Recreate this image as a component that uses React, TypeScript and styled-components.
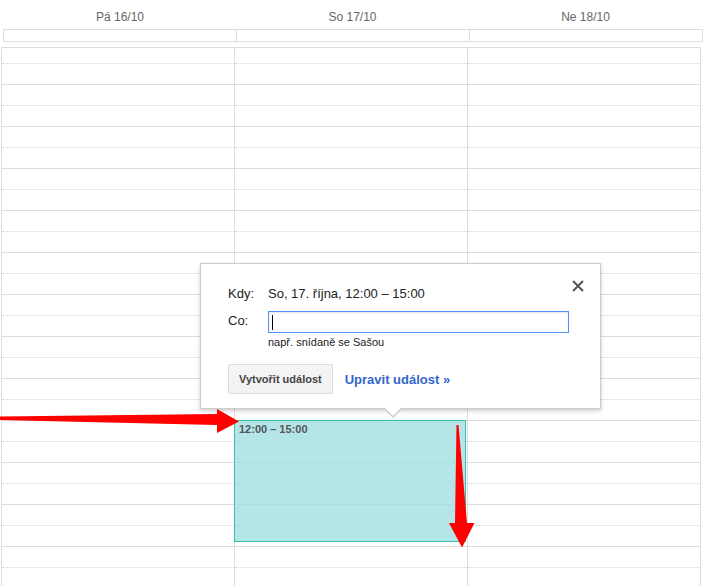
import React from 'react';
import styled, { createGlobalStyle } from 'styled-components';

const GlobalStyle = createGlobalStyle`
  html, body {
    margin: 0;
    padding: 0;
    background: #fff;
    font-family: 'Liberation Sans', Arial, sans-serif;
    overflow: hidden;
  }
`;

const COLUMNS = '232px 233px 233px';

const Page = styled.div`
  position: relative;
  width: 707px;
  height: 586px;
  overflow: hidden;
`;

const HeaderRow = styled.div`
  display: grid;
  grid-template-columns: ${COLUMNS};
  width: 698px;
  margin-left: 4px;
  height: 29px;
`;

const DayLabel = styled.div`
  display: flex;
  align-items: flex-end;
  justify-content: center;
  padding-bottom: 5px;
  box-sizing: border-box;
  font-size: 12px;
  line-height: 14px;
  color: #666;
`;

const AllDayRow = styled.div`
  display: grid;
  grid-template-columns: ${COLUMNS};
  width: 698px;
  height: 11px;
  margin-left: 3px;
  border: 1px solid #ddd;
`;

const AllDayCell = styled.div<{ $first?: boolean }>`
  border-left: ${(p) => (p.$first ? 'none' : '1px solid #ddd')};
`;

const Grid = styled.div`
  display: grid;
  grid-template-columns: ${COLUMNS};
  width: 698px;
  height: 560px;
  margin: 5px 0 0 1px;
  border: 1px solid #ddd;
  border-bottom: none;
`;

const Column = styled.div<{ $first?: boolean }>`
  position: relative;
  border-left: ${(p) => (p.$first ? 'none' : '1px solid #ddd')};
`;

const Slots = styled.div`
  margin-top: -5px;
  overflow: hidden;
  height: 545px;
`;

const Slot = styled.div<{ $dotted: boolean }>`
  height: 21px;
  box-sizing: border-box;
  border-bottom: 1px ${(p) => (p.$dotted ? 'dotted #d4d4d4' : 'solid #ddd')};
`;

const Event = styled.div`
  position: absolute;
  top: 372px;
  left: -1px;
  width: 232px;
  height: 122px;
  box-sizing: border-box;
  border: 1px solid #3cbfa9;
  background: rgba(160, 222, 228, 0.8);
  padding: 2px 4px;
  font-size: 11px;
  line-height: 13px;
  font-weight: bold;
  color: #555;
`;

const Bubble = styled.div`
  position: absolute;
  left: 200px;
  top: 263px;
  width: 401px;
  box-sizing: border-box;
  background: #fff;
  border: 1px solid #ccc;
  box-shadow: 0 2px 4px rgba(0, 0, 0, 0.2);
  padding: 22px 27px 14px;
  font-size: 13px;
  color: #222;
`;

const Tail = styled.div`
  position: absolute;
  left: 182px;
  bottom: -10px;
  width: 0;
  height: 0;
  border-left: 10px solid transparent;
  border-right: 10px solid transparent;
  border-top: 10px solid #ccc;

  &::after {
    content: '';
    position: absolute;
    left: -9px;
    top: -11px;
    border-left: 9px solid transparent;
    border-right: 9px solid transparent;
    border-top: 9px solid #fff;
  }
`;

const Close = styled.button`
  position: absolute;
  top: 14px;
  right: 14px;
  width: 16px;
  height: 16px;
  padding: 0;
  border: none;
  background: none;
  display: flex;
  align-items: center;
  justify-content: center;
  cursor: pointer;
`;

const Field = styled.div`
  display: grid;
  grid-template-columns: 40px 1fr;
  align-items: start;
  line-height: 16px;
`;

const Label = styled.div<{ $pad?: number }>`
  padding-top: ${(p) => p.$pad ?? 0}px;
  color: #222;
`;

const InputWrap = styled.div`
  margin-top: 9px;
  display: flex;
  flex-direction: column;
`;

const TextInput = styled.div`
  width: 301px;
  height: 22px;
  box-sizing: border-box;
  border: 1px solid #4d90fe;
  box-shadow: inset 0 1px 2px rgba(0, 0, 0, 0.1);
  display: flex;
  align-items: center;
  padding-left: 3px;
`;

const Caret = styled.span`
  width: 1px;
  height: 15px;
  background: #000;
`;

const Hint = styled.div`
  margin-top: 3px;
  font-size: 11px;
  line-height: 13px;
  color: #222;
`;

const Actions = styled.div`
  display: flex;
  align-items: center;
  gap: 12px;
  margin-top: 15px;
`;

const CreateButton = styled.button`
  height: 30px;
  padding: 0 10px;
  border: 1px solid #dcdcdc;
  border-radius: 2px;
  background: linear-gradient(#f5f5f5, #f1f1f1);
  font-family: inherit;
  font-size: 11px;
  font-weight: bold;
  color: #444;
`;

const EditLink = styled.a`
  font-size: 13px;
  font-weight: bold;
  color: #3366cc;
  text-decoration: none;
`;

const Overlay = styled.svg`
  position: absolute;
  left: 0;
  top: 0;
  pointer-events: none;
`;

const days = ['Pá 16/10', 'So 17/10', 'Ne 18/10'];
const slots = Array.from({ length: 26 }, (_, i) => i % 2 === 0);

const App = () => {
  return (
    <Page>
      <GlobalStyle />
      <HeaderRow>
        {days.map((d) => (
          <DayLabel key={d}>{d}</DayLabel>
        ))}
      </HeaderRow>
      <AllDayRow>
        {days.map((d, i) => (
          <AllDayCell key={d} $first={i === 0} />
        ))}
      </AllDayRow>
      <Grid>
        {days.map((d, i) => (
          <Column key={d} $first={i === 0}>
            <Slots>
              {slots.map((dotted, j) => (
                <Slot key={j} $dotted={dotted} />
              ))}
            </Slots>
            {i === 1 && <Event>12:00 – 15:00</Event>}
          </Column>
        ))}
      </Grid>

      <Bubble>
        <Close aria-label="Zavřít">
          <svg width="12" height="12" viewBox="0 0 12 12">
            <path d="M1 1L11 11M11 1L1 11" stroke="#555" strokeWidth="2" />
          </svg>
        </Close>
        <Field>
          <Label>Kdy:</Label>
          <div>So, 17. října, 12:00 – 15:00</div>
        </Field>
        <Field>
          <Label $pad={11}>Co:</Label>
          <InputWrap>
            <TextInput>
              <Caret />
            </TextInput>
            <Hint>např. snídaně se Sašou</Hint>
          </InputWrap>
        </Field>
        <Actions>
          <CreateButton>Vytvořit událost</CreateButton>
          <EditLink href="#">Upravit událost »</EditLink>
        </Actions>
        <Tail />
      </Bubble>

      <Overlay width="707" height="586">
        <polygon
          points="0,416.5 217,414 217,409 239,421.5 217,433 217,425 0,420"
          fill="#ff0000"
        />
        <polygon
          points="456.5,425 458.5,425 467,523 474.5,523 462,547.5 449,523 455,523"
          fill="#ff0000"
        />
      </Overlay>
    </Page>
  );
};

export default App;
